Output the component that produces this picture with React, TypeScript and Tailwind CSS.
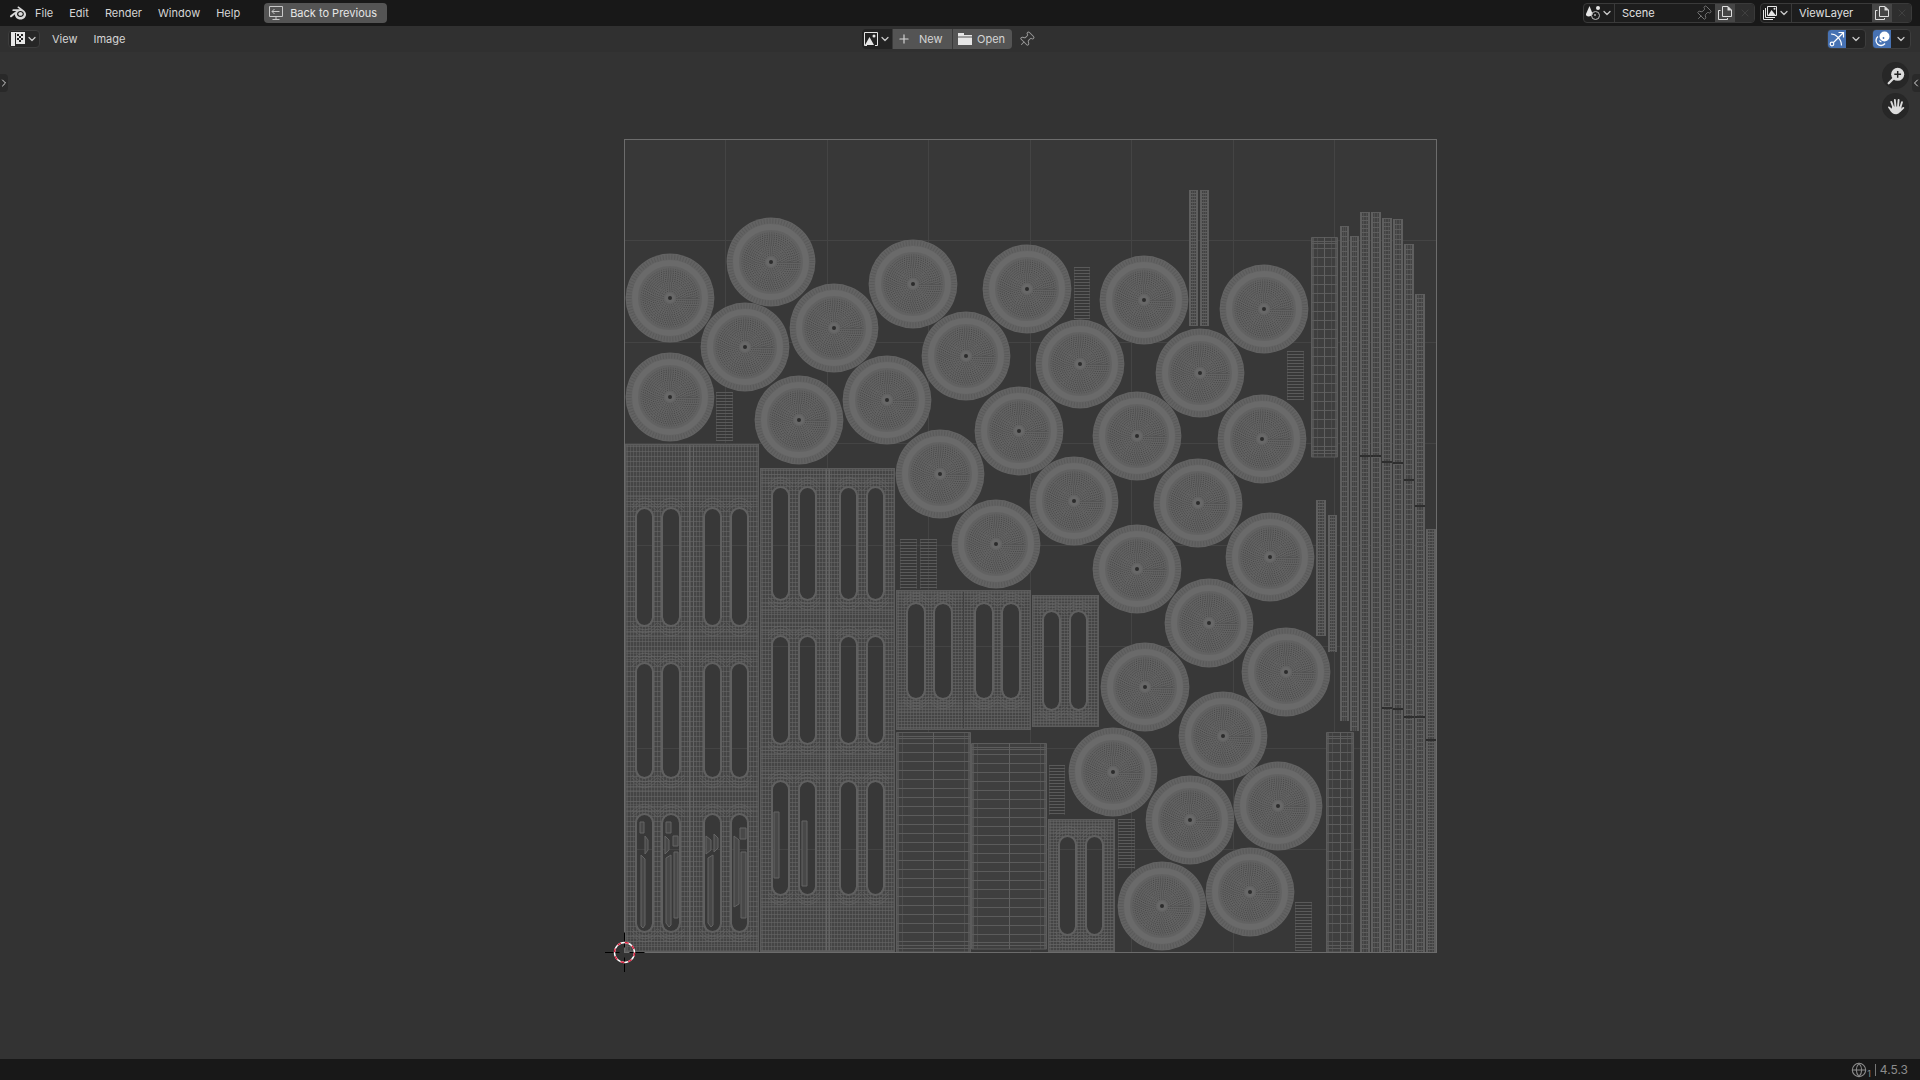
import { useId } from "react";
import type { ReactNode } from "react";
import { ChevronDown, ChevronLeft, ChevronRight, Globe, Pin, Plus, X } from "lucide-react";
import { SiBlender } from "react-icons/si";

type Box = [x0: number, y0: number, x1: number, y1: number];

interface PanelData {
  box: Box;
  seams: number[];
  seamColor: string;
  columns: [number, number][];
  rows: [number, number][];
  step: number;
}

// UV tile, in the coordinates of the canvas viewBox
const TILE: Box = [624, 87, 1436, 900];

const DISCS: [number, number][] = [
  [771, 210], [670, 246], [745, 295], [834, 276], [913, 232], [670, 345], [799, 368], [887, 348],
  [1027, 237], [1144, 248], [1264, 257], [966, 304], [1080, 312], [1200, 321], [1019, 379], [1137, 384],
  [1262, 387], [940, 422], [1074, 449], [1198, 451], [996, 492], [1137, 517], [1270, 505], [1209, 571],
  [1286, 620], [1145, 635], [1223, 684], [1113, 720], [1190, 768], [1278, 754], [1162, 854], [1250, 840],
];

const PANELS: PanelData[] = [
  {
    box: [625, 392, 759, 900],
    seams: [689, 693],
    seamColor: "#646464",
    columns: [[637, 652], [663, 679], [705, 720], [732, 747]],
    rows: [[457, 573], [612, 725], [763, 879]],
    step: 5,
  },
  {
    box: [760, 416, 895, 900],
    seams: [826, 829],
    seamColor: "#646464",
    columns: [[773, 788], [800, 815], [841, 856], [868, 883]],
    rows: [[436, 547], [585, 691], [730, 842]],
    step: 4,
  },
  {
    box: [896, 538, 1031, 678],
    seams: [963],
    seamColor: "#404040",
    columns: [[908, 924], [935, 951], [976, 992], [1003, 1019]],
    rows: [[552, 646]],
    step: 3,
  },
  {
    box: [1032, 543, 1099, 675],
    seams: [],
    seamColor: "#444",
    columns: [[1044, 1059], [1071, 1086]],
    rows: [[560, 657]],
    step: 3,
  },
  {
    box: [1048, 767, 1115, 900],
    seams: [],
    seamColor: "#444",
    columns: [[1060, 1075], [1087, 1102]],
    rows: [[785, 882]],
    step: 3,
  },
];

const LADDERS: { box: Box; step: number }[] = [
  { box: [896, 680, 970, 900], step: 9 },
  { box: [971, 691, 1046, 897], step: 9 },
  { box: [1311, 185, 1337, 405], step: 9 },
  { box: [1326, 680, 1353, 900], step: 9 },
];

const COMBS: Box[] = [
  [716, 340, 732, 389], [1074, 215, 1089, 266], [1287, 299, 1303, 348], [900, 487, 916, 537],
  [920, 487, 936, 537], [1049, 713, 1064, 763], [1118, 767, 1134, 817], [1295, 850, 1311, 899],
];

const STRIPS: { box: Box; breaks: number[]; step: number }[] = [
  { box: [1189, 138, 1198, 274], breaks: [], step: 3 },
  { box: [1200, 138, 1209, 274], breaks: [], step: 3 },
  { box: [1340, 174, 1349, 669], breaks: [], step: 5 },
  { box: [1350, 184, 1359, 679], breaks: [], step: 5 },
  { box: [1360, 160, 1370, 900], breaks: [403], step: 4 },
  { box: [1371, 160, 1381, 900], breaks: [403], step: 5 },
  { box: [1382, 166, 1392, 900], breaks: [409, 655], step: 4 },
  { box: [1393, 167, 1403, 900], breaks: [410, 656], step: 5 },
  { box: [1404, 192, 1414, 900], breaks: [427, 664], step: 5 },
  { box: [1415, 242, 1425, 900], breaks: [453, 664], step: 4 },
  { box: [1426, 477, 1436, 900], breaks: [687], step: 3 },
  { box: [1316, 448, 1326, 584], breaks: [], step: 3 },
  { box: [1328, 463, 1337, 600], breaks: [], step: 3 },
];

// Leftover slivers packed into the slots of the two large panels
const SLIVERS = [
  "M640 770h4v11h-4z", "M645 784l3 4v10l-3 4z", "M641 803l4 4v66l-2 3l-2-2z",
  "M666 770h5v11h-5z", "M665 784l4 4v10l-4 4z", "M673 784h5v10h-5z", "M666 806l5-3v70l-2 2l-3-4z", "M674 800h4v66h-4z",
  "M706 784l5 4v10l-5 4z", "M714 782l4 4v10l-4 4z", "M708 806l5-3v70l-2 2l-3-4z",
  "M740 776h6v11h-6z", "M734 784l5 4v64l-5 3z", "M741 800h5v66h-5z",
  "M774 760h5v66h-5z", "M802 769h5v65h-5z",
];

function range(from: number, to: number, step: number): number[] {
  const out: number[] = [];
  for (let v = from; v < to; v += step) out.push(v);
  return out;
}

function slotPath(x0: number, y0: number, x1: number, y1: number) {
  const r = (x1 - x0) / 2;
  return `M${x0} ${y0 + r}a${r} ${r} 0 0 1 ${2 * r} 0V${y1 - r}a${r} ${r} 0 0 1 ${-2 * r} 0z`;
}

function Disc() {
  return (
    <symbol id="disc" viewBox="-45 -45 90 90" overflow="visible">
      <circle r="44.400" fill="#636363" />
      <circle r="41" fill="none" stroke="#5a5a5a" strokeWidth="5" strokeDasharray="1 1.9" />
      <circle r="35" fill="none" stroke="#6a6a6a" strokeWidth="6" />
      <circle r="31" fill="#626262" />
      {range(7, 31, 2).map((r) => (
        <circle
          key={r}
          r={r}
          fill="none"
          stroke="#383838"
          strokeWidth="1"
          strokeDasharray={r > 15 ? "1 1.4" : "0.8 1.5"}
          opacity={r > 27 ? 0.4 : 0.8}
        />
      ))}
      <circle r="5" fill="#686868" />
      <circle r="2" fill="#2c2c2c" />
    </symbol>
  );
}

function Panel({ box, seams, seamColor, columns, rows, step }: PanelData) {
  const clip = useId();
  const [x0, y0, x1, y1] = box;
  const slots = rows.flatMap(([a, b]) => columns.map(([l, r]) => slotPath(l, a, r, b)));
  const outline = `M${x0} ${y0}H${x1}V${y1}H${x0}z`;

  return (
    <g>
      <clipPath id={clip}>
        <path d={outline + slots.join("")} clipRule="evenodd" />
      </clipPath>
      <g clipPath={`url(#${clip})`} fill="none" stroke="#686868">
        <path d={outline} fill="#454545" />
        <path
          opacity="0.5"
          d={range(x0 + 2, x1, 3).map((x) => `M${x}.5 ${y0}V${y1}`).join("")}
        />
        <path
          opacity="0.6"
          d={range(y0 + 2, y1, step).map((y) => `M${x0} ${y}.5H${x1}`).join("")}
        />
        {/* denser rows close to the slot ends */}
        <path
          opacity="0.35"
          d={rows
            .flatMap(([a, b]) => [...range(a - 14, a - 2, 3), ...range(b + 4, b + 16, 3)])
            .map((y) => `M${x0} ${y}.5H${x1}`)
            .join("")}
        />
        {rows.map(([a, b]) =>
          columns.map(([l, r]) =>
            [4, 7, 10].map((d) => (
              <path
                key={`${a}-${l}-${d}`}
                opacity="0.6"
                d={`M${l - 5} ${a + 6 - d}Q${(l + r) / 2} ${a - 8 - d} ${r + 5} ${a + 6 - d}M${l - 5} ${b - 6 + d}Q${(l + r) / 2} ${b + 8 + d} ${r + 5} ${b - 6 + d}`}
              />
            ))
          )
        )}
        <path d={slots.join("")} stroke="#606060" strokeWidth="4" />
        {seams.map((x) => (
          <path key={x} d={`M${x}.5 ${y0}V${y1}`} stroke={seamColor} strokeWidth="1" />
        ))}
        <path d={outline} stroke="#5c5c5c" strokeWidth="3" />
      </g>
    </g>
  );
}

function Ladder({ box, step }: { box: Box; step: number }) {
  const [x0, y0, x1, y1] = box;
  const mid = Math.round((x0 + x1) / 2);
  const rungs = [y0 + 4, y0 + 6, ...range(y0 + 11, y1 - 8, step), y1 - 7, y1 - 4];
  return (
    <g fill="none" stroke="#5c5c5c">
      <path d={`M${x0}.5 ${y0}.5H${x1}.5V${y1}H${x0}.5z`} fill="#3f3f3f" />
      <path d={`M${x0 + 2} ${y0 + 1}V${y1}M${x1 - 1} ${y0 + 1}V${y1}`} strokeWidth="2" opacity="0.7" />
      <path d={`M${x0 + 6}.5 ${y0}V${y1}M${x1 - 6}.5 ${y0}V${y1}`} opacity="0.5" />
      <path d={rungs.map((y) => `M${x0} ${y}.5H${x1}`).join("")} />
      <path d={`M${mid}.5 ${y0}V${y1}`} stroke="#606060" />
    </g>
  );
}

function Strip({ box, breaks, step }: { box: Box; breaks: number[]; step: number }) {
  const [x0, y0, x1, y1] = box;
  return (
    <g fill="none" stroke="#5e5e5e">
      <rect x={x0} y={y0} width={x1 - x0} height={y1 - y0} fill="#434343" stroke="none" />
      <path d={range(y0, y1, step).map((y) => `M${x0} ${y}.5H${x1}`).join("")} />
      <path d={`M${x0 + 1} ${y0}V${y1}M${x1 - 1} ${y0}V${y1}`} strokeWidth="2" stroke="#5f5f5f" />
      <path d={`M${x0 + 3}.5 ${y0}V${y1}M${x1 - 4}.5 ${y0}V${y1}`} opacity="0.5" />
      {breaks.map((y) => (
        <path key={y} d={`M${x0} ${y + 1}H${x1}`} stroke="#2e2e2e" strokeWidth="2" />
      ))}
    </g>
  );
}

function UvCanvas() {
  const [x0, y0, x1, y1] = TILE;
  const cells = range(1, 8, 1).map((i) => Math.floor((i * (x1 - x0)) / 8));
  return (
    <svg
      viewBox="0 0 1920 1007"
      className="absolute inset-0 h-full w-full"
      role="img"
      aria-label="UV layout"
    >
      <defs>
        <Disc />
      </defs>
      <rect x={x0} y={y0} width={x1 - x0} height={y1 - y0} fill="#383838" />
      <path
        d={cells.map((c) => `M${x0 + c}.5 ${y0}V${y1}M${x0} ${y0 + c}.5H${x1}`).join("")}
        stroke="#444"
        fill="none"
      />
      {COMBS.map(([a, b, c, d]) => (
        <g key={`${a}-${b}`} stroke="#5a5a5a">
          <path d={range(b, d + 1, 3).map((y) => `M${a} ${y}.5H${c + 1}`).join("")} />
          <path d={`M${a}.5 ${b}V${d}M${c}.5 ${b}V${d}`} opacity="0.45" />
        </g>
      ))}
      {PANELS.map((panel) => (
        <Panel key={panel.box.join()} {...panel} />
      ))}
      <path d={SLIVERS.join("")} fill="#484848" stroke="#646464" />
      {LADDERS.map((ladder) => (
        <Ladder key={ladder.box.join()} {...ladder} />
      ))}
      {STRIPS.map((strip) => (
        <Strip key={strip.box.join()} {...strip} />
      ))}
      {DISCS.map(([x, y]) => (
        <use key={`${x}-${y}`} href="#disc" x={x - 45} y={y - 45} width="90" height="90" />
      ))}
      <rect x={x0 + 0.5} y={y0 + 0.5} width={x1 - x0} height={y1 - y0} fill="none" stroke="#6c6c6c" />

      {/* 2D cursor */}
      <g transform={`translate(${x0 + 0.5} ${y1 + 0.5})`} fill="none">
        <path d="M-19.5 0H-5M5 0H20M0 -20V-5M0 5V19.5" stroke="#000" />
        <circle r="10" stroke="#fff" strokeWidth="1.4" />
        <circle r="10" stroke="#e0203f" strokeWidth="1.4" strokeDasharray="3.93 3.93" />
      </g>
    </svg>
  );
}

function Icon({ children, size = 16 }: { children: ReactNode; size?: number }) {
  return (
    <svg width={size} height={size} viewBox="0 0 16 16" fill="none" aria-hidden="true" className="shrink-0">
      {children}
    </svg>
  );
}

function BackIcon() {
  return (
    <Icon>
      <path d="M1.500 1.500H14.500V11.500H1.500zM8 11.500V14M4.500 14.500H11.500M11.500 6.500H4M6.500 4L4 6.500L6.500 9" stroke="#c8c8c8" />
    </Icon>
  );
}

function ImageEditorIcon() {
  return (
    <Icon>
      <path d="M1 1h5v1.500H5V15H1zM5.500 1H15v12H5.500z" fill="#e6e6e6" />
      <path d="M7 3h2v2H7zM11 3h2v2h-2zM9 5h2v2H9zM7 7h2v2H7zM11 7h2v2h-2zM9 9h2v2H9zM5 2h1v11H5z" fill="#222" />
    </Icon>
  );
}

function ImageIcon() {
  return (
    <Icon>
      <path d="M4 14.500H1.500V1.500H14.500V14.500H12" stroke="#e6e6e6" />
      <path d="M2 14L6.500 6L11 14z" fill="#e6e6e6" />
      <circle cx="11" cy="5" r="1.500" fill="#e6e6e6" />
    </Icon>
  );
}

function FolderIcon() {
  return (
    <Icon>
      <path d="M1 2h6v2h8v1.500H1zM1 6.500h14V14H1z" fill="#e6e6e6" />
    </Icon>
  );
}

function SceneIcon() {
  return (
    <Icon>
      <path d="M4.500 1L7.500 8.500C8 12-0.500 13 1.200 8.500z" fill="#e6e6e6" />
      <circle cx="13" cy="3" r="2" fill="#e6e6e6" />
      <circle cx="10.500" cy="10.500" r="4" stroke="#bdbdbd" />
      <path d="M9 9h2v2H9z" fill="#8a8a8a" />
    </Icon>
  );
}

function LayersIcon() {
  return (
    <Icon>
      <path d="M5.500 1.500H14.500V10.500H5.500zM3.500 3V12.500H13M1.500 5V14.500H11" stroke="#e6e6e6" />
      <path d="M6 10.500L9.500 5L14 10.500z" fill="#e6e6e6" />
      <circle cx="12.500" cy="3.800" r="1" fill="#e6e6e6" />
    </Icon>
  );
}

function DuplicateIcon() {
  return (
    <Icon>
      <path d="M5.500 1.500H11L14.500 5V11.500H5.500zM3.500 5.500H1.500V14.500H10.500V13" stroke="#dedede" />
      <path d="M10.500 1v4.500H15z" fill="#dedede" />
    </Icon>
  );
}

function GizmoIcon() {
  return (
    <Icon>
      <path d="M2 3C7 3 12.500 8 12.500 14.500M4.500 11.500L14 2M9.500 1.500H14.500V6.500" stroke="#fff" strokeWidth="1.200" />
      <circle cx="3" cy="13" r="1.800" stroke="#fff" strokeWidth="1.200" />
    </Icon>
  );
}

function OverlayIcon() {
  return (
    <Icon>
      <circle cx="10.500" cy="5.500" r="5" fill="#fff" />
      <path d="M4 5.500A5 5 0 1 0 11 12.500" stroke="#fff" strokeWidth="1.300" />
      <path d="M5.500 9.500a2.500 2.500 0 0 0 2 1.500" stroke="#fff" strokeWidth="1.200" />
      <circle cx="9.500" cy="7" r="0.900" fill="#4772b3" />
    </Icon>
  );
}

function ZoomIcon() {
  return (
    <Icon size={18}>
      <circle cx="9.500" cy="6.500" r="5.800" fill="#dcdcdc" />
      <path d="M5.500 10.500L1.500 14.500" stroke="#dcdcdc" strokeWidth="2" strokeLinecap="round" />
      <path d="M9.500 3.500V9.500M6.500 6.500H12.500" stroke="#222" strokeWidth="1.300" />
    </Icon>
  );
}

function HandIcon() {
  return (
    <Icon size={18}>
      <path d="M5.500 8L3.800 3.500M7.500 7.500L7 1.800M9.800 7.500L10.300 1.800M11.800 8.500L13.300 3.800" stroke="#dcdcdc" strokeWidth="1.700" strokeLinecap="round" />
      <path d="M4.700 7.500h8c.3 1.500-.1 2.300-.1 3-1 2.300-2 3.900-4.400 3.900-3 0-4.500-1.500-6-4.200C1.400 9 .400 8.300 1.200 7.600 2 7.200 3.400 8.700 4 9.500z" fill="#dcdcdc" />
      <path d="M11.500 11.500L14.500 8.800" stroke="#dcdcdc" strokeWidth="1.700" strokeLinecap="round" />
    </Icon>
  );
}

function Caret() {
  return <ChevronDown size={12} strokeWidth={2.5} className="shrink-0 text-[#c9c9c9]" aria-hidden="true" />;
}

interface SelectorProps {
  icon: ReactNode;
  label: string;
  className?: string;
}

function Selector({ icon, label, className = "" }: SelectorProps) {
  return (
    <button type="button" aria-label={label} className={`flex h-full shrink-0 items-center ${className}`}>
      {icon}
      <Caret />
    </button>
  );
}

interface DataBlockProps {
  icon: ReactNode;
  name: string;
  label: string;
  pinned?: boolean;
}

function DataBlock({ icon, name, label, pinned }: DataBlockProps) {
  return (
    <div className="flex h-5 items-stretch overflow-hidden rounded border border-[#3a3a3a] bg-[#1d1d1d]">
      <Selector icon={icon} label={`Browse ${label}`} className="w-[31px] justify-center border-r border-[#3a3a3a]" />
      <input
        aria-label={label}
        defaultValue={name}
        className="w-20 bg-transparent pl-[7px] text-[#e0e0e0] outline-none"
      />
      {pinned && (
        <button type="button" aria-label="Pin scene" className="w-5 text-[#777]">
          <Pin size={17} strokeWidth={1.3} className="rotate-45" />
        </button>
      )}
      <button type="button" aria-label={`New ${label}`} className="flex w-5 items-center justify-center bg-[#464646]">
        <DuplicateIcon />
      </button>
      <button type="button" aria-label={`Remove ${label}`} className="flex w-[19px] items-center justify-center bg-[#2e2e2e] text-[#474747]">
        <X size={12} strokeWidth={1.5} />
      </button>
    </div>
  );
}

function TopBar() {
  return (
    <header className="flex h-[26px] shrink-0 items-center justify-between bg-[#181818] pr-2 pl-2.5">
      <nav className="flex items-center gap-4">
        <div className="flex items-center gap-[9px]">
          <button type="button" aria-label="Blender" className="text-[#d9d9d9]">
            <SiBlender size={16} />
          </button>
          <button type="button">File</button>
        </div>
        {["Edit", "Render", "Window", "Help"].map((item) => (
          <button key={item} type="button">
            {item}
          </button>
        ))}
        <button type="button" className="ml-2 flex h-5 items-center gap-1.5 rounded bg-[#545454] pr-2.5 pl-1 text-[#e6e6e6]">
          <BackIcon />
          Back to Previous
        </button>
      </nav>
      <div className="flex items-center gap-[5px]">
        <DataBlock icon={<SceneIcon />} name="Scene" label="Scene" pinned />
        <DataBlock icon={<LayersIcon />} name="ViewLayer" label="ViewLayer" />
      </div>
    </header>
  );
}

function Toggle({ icon, label }: { icon: ReactNode; label: string }) {
  return (
    <div className="flex h-5 items-stretch overflow-hidden rounded border border-[#3d3d3d] bg-[#232323]">
      <button type="button" aria-label={label} aria-pressed="true" className="flex w-[18px] items-center justify-center bg-[#4772b3]">
        {icon}
      </button>
      <button type="button" aria-label={`${label} options`} className="flex w-[19px] items-center justify-center">
        <Caret />
      </button>
    </div>
  );
}

function EditorHeader() {
  return (
    <div className="flex h-[26px] shrink-0 items-center bg-[#303030] pr-[9px] pl-2">
      <div className="flex flex-1 items-center">
        <Selector
          icon={<ImageEditorIcon />}
          label="Editor type"
          className="mr-3 max-h-5 w-8 justify-center rounded border border-[#3d3d3d] bg-[#262626]"
        />
        <div className="flex items-center gap-4">
          {["View", "Image"].map((item) => (
            <button key={item} type="button">
              {item}
            </button>
          ))}
        </div>
      </div>
      <div className="flex items-center pr-[22px]">
        <div className="flex h-5 items-stretch gap-px overflow-hidden rounded bg-[#3a3a3a]">
          <Selector icon={<ImageIcon />} label="Browse image" className="w-[30px] justify-center bg-[#232323]" />
          <button type="button" className="flex w-[59px] items-center gap-2 bg-[#545454] pl-1">
            <Plus size={14} strokeWidth={2} />
            New
          </button>
          <button type="button" className="flex w-[59px] items-center gap-1 bg-[#545454] pl-1">
            <FolderIcon />
            Open
          </button>
        </div>
        <button type="button" aria-label="Pin image" className="ml-1.5 text-[#9a9a9a]">
          <Pin size={17} strokeWidth={1.4} className="rotate-45" />
        </button>
      </div>
      <div className="flex flex-1 items-center justify-end gap-1.5">
        <Toggle icon={<GizmoIcon />} label="Show gizmos" />
        <Toggle icon={<OverlayIcon />} label="Show overlays" />
      </div>
    </div>
  );
}

export default function App() {
  return (
    <div className="flex h-screen flex-col overflow-hidden bg-[#333] font-['Inter','Liberation_Sans',sans-serif] text-[11px] leading-4 text-[#d5d5d5]">
      <TopBar />
      <EditorHeader />
      <main className="relative min-h-0 flex-1 bg-[#333]">
        <UvCanvas />
        <button
          type="button"
          aria-label="Show toolbar"
          className="absolute top-[22px] left-0 flex h-[18px] w-2 items-center justify-center rounded-r bg-[#292929]"
        >
          <ChevronRight size={12} className="shrink-0" />
        </button>
        <button
          type="button"
          aria-label="Show sidebar"
          className="absolute top-[22px] right-0 flex h-[18px] w-2 items-center justify-center rounded-l bg-[#292929]"
        >
          <ChevronLeft size={12} className="shrink-0" />
        </button>
        <div className="absolute top-2.5 right-[11px] flex flex-col gap-1">
          <button type="button" aria-label="Zoom" className="flex size-[27px] items-center justify-center rounded-full bg-[#272727]">
            <ZoomIcon />
          </button>
          <button type="button" aria-label="Pan" className="flex size-[27px] items-center justify-center rounded-full bg-[#272727]">
            <HandIcon />
          </button>
        </div>
      </main>
      <footer className="flex h-[21px] shrink-0 items-center justify-end bg-[#181818] pr-3 text-[#8c8c8c]">
        <Globe size={16} strokeWidth={1.6} aria-hidden="true" />
        <span className="self-end text-[9px] leading-3">1</span>
        <span className="mx-1 h-3 w-px bg-[#777]" />
        <span className="text-xs">4.5.3</span>
      </footer>
    </div>
  );
}
